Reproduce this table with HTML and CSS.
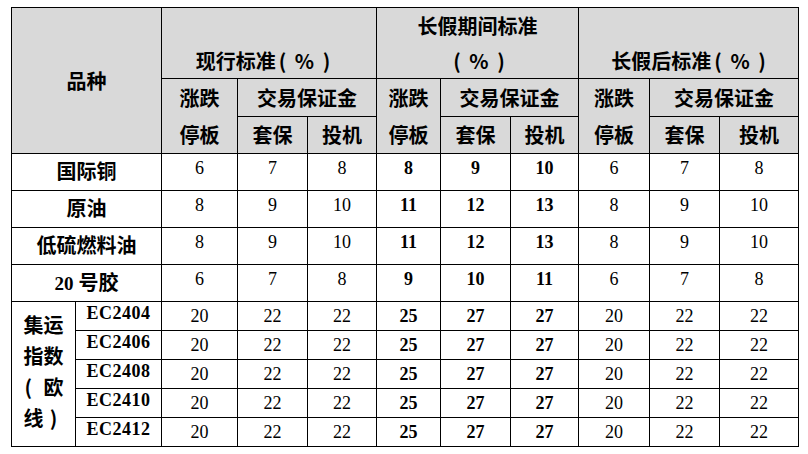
FILE: index.html
```html
<!DOCTYPE html>
<html lang="zh-CN">
<head>
<meta charset="utf-8">
<title>长假保证金标准</title>
<link rel="stylesheet" href="styles.css">
</head>
<body>
<table class="grid">
  <colgroup>
    <col class="w64"><col class="w86"><col class="w76"><col class="w70"><col class="w69">
    <col class="w64"><col class="w70"><col class="w68"><col class="w71"><col class="w70"><col class="w79">
  </colgroup>
  <thead>
    <tr class="h70">
      <th colspan="2" rowspan="3" class="mid">品种</th>
      <th colspan="3" class="bot shift">现行标准<span class="pct">( % )</span></th>
      <th colspan="3" class="bot">长假期间标准<br><span class="pct">( % )</span></th>
      <th colspan="3" class="bot">长假后标准<span class="pct">( % )</span></th>
    </tr>
    <tr class="h37">
      <th rowspan="2" class="two">涨跌<br>停板</th>
      <th colspan="2">交易保证金</th>
      <th rowspan="2" class="two">涨跌<br>停板</th>
      <th colspan="2">交易保证金</th>
      <th rowspan="2" class="two">涨跌<br>停板</th>
      <th colspan="2">交易保证金</th>
    </tr>
    <tr class="h37">
      <th>套保</th><th>投机</th>
      <th>套保</th><th>投机</th>
      <th>套保</th><th>投机</th>
    </tr>
  </thead>
  <tbody>
    <tr class="h37">
      <td colspan="2" class="name">国际铜</td>
      <td class="n">6</td><td class="n">7</td><td class="n">8</td>
      <td class="n b">8</td><td class="n b">9</td><td class="n b">10</td>
      <td class="n">6</td><td class="n">7</td><td class="n">8</td>
    </tr>
    <tr class="h37">
      <td colspan="2" class="name">原油</td>
      <td class="n">8</td><td class="n">9</td><td class="n">10</td>
      <td class="n b">11</td><td class="n b">12</td><td class="n b">13</td>
      <td class="n">8</td><td class="n">9</td><td class="n">10</td>
    </tr>
    <tr class="h37">
      <td colspan="2" class="name">低硫燃料油</td>
      <td class="n">8</td><td class="n">9</td><td class="n">10</td>
      <td class="n b">11</td><td class="n b">12</td><td class="n b">13</td>
      <td class="n">8</td><td class="n">9</td><td class="n">10</td>
    </tr>
    <tr class="h37">
      <td colspan="2" class="name"><span class="latin">20</span> 号胶</td>
      <td class="n">6</td><td class="n">7</td><td class="n">8</td>
      <td class="n b">9</td><td class="n b">10</td><td class="n b">11</td>
      <td class="n">6</td><td class="n">7</td><td class="n">8</td>
    </tr>
    <tr class="h29">
      <td rowspan="5" class="group">集运<br>指数<br><span class="pl">(</span>欧<br>线<span class="pr">)</span></td>
      <td class="code">EC2404</td>
      <td class="m">20</td><td class="m">22</td><td class="m">22</td>
      <td class="m b">25</td><td class="m b">27</td><td class="m b">27</td>
      <td class="m">20</td><td class="m">22</td><td class="m">22</td>
    </tr>
    <tr class="h29">
      <td class="code">EC2406</td>
      <td class="m">20</td><td class="m">22</td><td class="m">22</td>
      <td class="m b">25</td><td class="m b">27</td><td class="m b">27</td>
      <td class="m">20</td><td class="m">22</td><td class="m">22</td>
    </tr>
    <tr class="h29">
      <td class="code">EC2408</td>
      <td class="m">20</td><td class="m">22</td><td class="m">22</td>
      <td class="m b">25</td><td class="m b">27</td><td class="m b">27</td>
      <td class="m">20</td><td class="m">22</td><td class="m">22</td>
    </tr>
    <tr class="h29">
      <td class="code">EC2410</td>
      <td class="m">20</td><td class="m">22</td><td class="m">22</td>
      <td class="m b">25</td><td class="m b">27</td><td class="m b">27</td>
      <td class="m">20</td><td class="m">22</td><td class="m">22</td>
    </tr>
    <tr class="h29">
      <td class="code">EC2412</td>
      <td class="m">20</td><td class="m">22</td><td class="m">22</td>
      <td class="m b">25</td><td class="m b">27</td><td class="m b">27</td>
      <td class="m">20</td><td class="m">22</td><td class="m">22</td>
    </tr>
  </tbody>
</table>
</body>
</html>
```

FILE: styles.css
```css
html, body {
  margin: 0;
  padding: 0;
  background: #ffffff;
}

body {
  padding: 7px 0 0 11px;
  font-family: "Liberation Serif", "Noto Sans CJK SC", serif;
  color: #000000;
}

.grid {
  border-collapse: collapse;
  table-layout: fixed;
  width: 788px;
}

.w64 { width: 64px; }
.w68 { width: 68px; }
.w69 { width: 69px; }
.w70 { width: 70px; }
.w71 { width: 71px; }
.w76 { width: 76px; }
.w79 { width: 79px; }
.w86 { width: 86px; }

.h70 { height: 70px; }
.h37 { height: 37px; }
.h29 { height: 29px; }

.grid th,
.grid td {
  border: 1px solid #000000;
  padding: 0;
  text-align: center;
  white-space: nowrap;
  overflow: hidden;
}

.grid th {
  background: #d9d9d9;
  font-family: "Noto Sans CJK SC", "Liberation Sans", sans-serif;
  font-size: 20px;
  font-weight: 700;
  line-height: 35px;
  vertical-align: middle;
}

.grid th.bot {
  vertical-align: bottom;
}

.grid th.shift {
  padding-right: 12px;
}

.pct {
  margin-left: 3px;
  word-spacing: 4px;
}

.grid th.two {
  line-height: 37px;
}

.grid th.mid {
  line-height: 30px;
}

.name {
  font-family: "Liberation Serif", "Noto Sans CJK SC", serif;
  font-size: 20px;
  font-weight: 700;
  line-height: 28px;
  vertical-align: middle;
}

.latin {
  font-size: 19px;
}

.n {
  font-size: 18px;
  line-height: 22px;
  vertical-align: middle;
  padding-bottom: 9px !important;
}

.m {
  font-size: 18px;
  line-height: 20px;
  vertical-align: middle;
  padding-bottom: 1px !important;
}

.b {
  font-weight: 700;
}

.code {
  font-size: 18px;
  font-weight: 700;
  letter-spacing: 0.5px;
  line-height: 20px;
  vertical-align: middle;
  padding-bottom: 6px !important;
}

.group {
  font-family: "Noto Sans CJK SC", "Liberation Sans", sans-serif;
  font-size: 20px;
  font-weight: 700;
  line-height: 31px;
  vertical-align: middle;
  padding-bottom: 6px !important;
}

.pl {
  display: inline-block;
  width: 1em;
  text-align: left;
  padding-left: 1px;
  box-sizing: border-box;
}

.pr {
  display: inline-block;
  width: 1em;
  text-align: center;
}
```
